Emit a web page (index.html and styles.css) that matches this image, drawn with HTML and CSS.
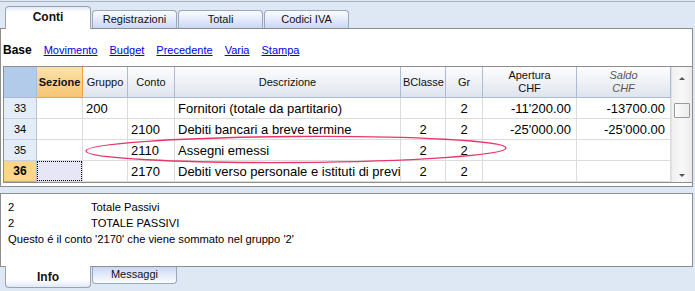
FILE: index.html
```html
<!DOCTYPE html>
<html lang="it">
<head>
    <meta charset="UTF-8">
    <title>Conti</title>
    <link rel="stylesheet" href="styles.css">
</head>
<body>
    <div class="topline"></div>
    <div class="tabs">
        <div class="tab active">Conti</div>
        <div class="tab">Registrazioni</div>
        <div class="tab">Totali</div>
        <div class="tab">Codici IVA</div>
    </div>
    <div class="panel">
        <div class="views">
            <b>Base</b>
            <a href="#">Movimento</a>
            <a href="#">Budget</a>
            <a href="#">Precedente</a>
            <a href="#">Varia</a>
            <a href="#">Stampa</a>
        </div>
        <div class="grid-wrap">
            <table class="grid">
                <colgroup>
                    <col class="c-num"><col class="c-sez"><col class="c-gru"><col class="c-con">
                    <col class="c-des"><col class="c-bcl"><col class="c-gr"><col class="c-ape"><col class="c-sal">
                </colgroup>
                <thead>
                    <tr>
                        <th class="corner"></th>
                        <th class="cur">Sezione</th>
                        <th>Gruppo</th>
                        <th>Conto</th>
                        <th>Descrizione</th>
                        <th>BClasse</th>
                        <th>Gr</th>
                        <th>Apertura<br>CHF</th>
                        <th class="calc">Saldo<br>CHF</th>
                    </tr>
                </thead>
                <tbody>
                    <tr>
                        <td class="num">33</td><td></td><td>200</td><td></td>
                        <td>Fornitori (totale da partitario)</td><td class="mid"></td><td class="mid">2</td>
                        <td class="amt">-11'200.00</td><td class="amt">-13700.00</td>
                    </tr>
                    <tr>
                        <td class="num">34</td><td></td><td></td><td>2100</td>
                        <td>Debiti bancari a breve termine</td><td class="mid">2</td><td class="mid">2</td>
                        <td class="amt">-25'000.00</td><td class="amt">-25'000.00</td>
                    </tr>
                    <tr>
                        <td class="num">35</td><td></td><td></td><td>2110</td>
                        <td>Assegni emessi</td><td class="mid">2</td><td class="mid">2</td>
                        <td></td><td></td>
                    </tr>
                    <tr class="current">
                        <td class="num">36</td><td class="sel"><span></span></td><td></td><td>2170</td>
                        <td>Debiti verso personale e istituti di previ</td><td class="mid">2</td><td class="mid">2</td>
                        <td></td><td></td>
                    </tr>
                </tbody>
            </table>
            <div class="scrollbar">
                <div class="arrow up"></div>
                <div class="thumb"></div>
                <div class="track"></div>
                <div class="arrow down"></div>
            </div>
        </div>
    </div>
    <div class="info">
        <span>2</span><span>Totale Passivi</span>
        <span>2</span><span>TOTALE PASSIVI</span>
        <span class="wide">Questo é il conto '2170' che viene sommato nel gruppo '2'</span>
    </div>
    <div class="tabs bottom">
        <div class="tab active">Info</div>
        <div class="tab">Messaggi</div>
    </div>

    <svg class="mark" width="695" height="291" viewBox="0 0 695 291">
        <ellipse cx="296" cy="149.5" rx="210" ry="13" fill="none" stroke="#e8366b" stroke-width="1.4" transform="rotate(-0.4 296 149.5)"/>
    </svg>
</body>
</html>
```

FILE: styles.css
```css
body {
    margin: 0;
    padding-top: 1px;
    width: 695px;
    height: 290px;
    background-color: #dee8f4;
    font-family: "Liberation Sans", Arial, sans-serif;
    font-size: 11px;
    color: #000;
    position: relative;
    overflow: hidden;
}
.topline {
    height: 0;
    border-top: 1px solid #a8b3c2;
}

/* tabs */
.tabs {
    display: flex;
    align-items: flex-end;
    gap: 1px;
    padding-left: 5px;
    margin-top: 4px;
    height: 22px;
    position: relative;
    z-index: 2;
}
.tab {
    width: 83px;
    height: 17px;
    line-height: 17px;
    text-align: center;
    border: 1px solid #9aa7bd;
    border-bottom: none;
    border-radius: 4px 4px 0 0;
    background: linear-gradient(#fbfcff, #e6edfb 45%, #c9d7f4);
    color: #111;
}
.tab.active {
    width: 84px;
    height: 22px;
    line-height: 21px;
    font-weight: bold;
    font-size: 12px;
    border-color: #9aa3ae;
    background: linear-gradient(#dfe9f8, #ffffff 5px, #ffffff);
    margin-bottom: -1px;
}
.tabs.bottom {
    margin-top: 0;
    align-items: flex-start;
}
.tabs.bottom .tab {
    border-top: none;
    border-bottom: 1px solid #9aa7bd;
    border-radius: 0 0 4px 4px;
    height: 16px;
    line-height: 14px;
    background: linear-gradient(#c9d7f4, #e6edfb 55%, #fbfcff);
}
.tabs.bottom .tab.active {
    height: 21px;
    line-height: 22px;
    border-color: #9aa3ae;
    background: linear-gradient(#ffffff, #ffffff 14px, #dfe9f8);
    margin-top: -1px;
}

/* main panel */
.panel {
    height: 157px;
    width: 689px;
    border: 1px solid #8e8e8e;
    background-color: #fff;
    padding: 0 0 0 2px;
}
.views {
    height: 33px;
    padding-top: 4px;
    display: flex;
    align-items: center;
    gap: 12px;
    font-size: 11px;
}
.views b {
    font-size: 12px;
}
.views a {
    color: #0000ee;
}

.grid-wrap {
    display: flex;
    width: 688px;
    border: 1px solid #8e8e8e;
    background-color: #fff;
}
.grid {
    border-collapse: separate;
    border-spacing: 0;
    table-layout: fixed;
    width: 667px;
}
.c-num { width: 33px; }
.c-sez { width: 46px; }
.c-gru { width: 45px; }
.c-con { width: 47px; }
.c-des { width: 226px; }
.c-bcl { width: 45px; }
.c-gr { width: 37px; }
.c-ape { width: 94px; }
.c-sal { width: 94px; }

.grid th {
    height: 30px;
    padding: 0 2px;
    font-weight: normal;
    font-size: 11px;
    line-height: 13px;
    white-space: nowrap;
    overflow: hidden;
    border-right: 1px solid #a8bcd6;
    border-bottom: 1px solid #a8bcd6;
    background: linear-gradient(#fdfdfe, #eef1f6 50%, #dee4ed);
    color: #111;
}
.grid th.corner {
    background: #b3cbea;
    border-right-color: #a7bdd9;
}
.grid th.cur {
    font-weight: bold;
    padding: 0;
    background: linear-gradient(#fbe2ac, #f9d48c 50%, #f6c577);
    border-right: 1px solid #f0a23c;
    border-bottom-color: #f0a23c;
}
.grid th.calc {
    font-style: italic;
    color: #555;
}
.grid td {
    height: 20px;
    padding: 0 3px;
    font-size: 13px;
    white-space: nowrap;
    overflow: hidden;
    border-right: 1px solid #dcdcdc;
    border-bottom: 1px solid #dcdcdc;
}
.grid td.num {
    text-align: center;
    font-size: 11px;
    background-color: #e4ecf7;
    border-right-color: #b3c3d8;
    border-bottom-color: #c4d1e2;
}
.grid tr.current td.num {
    background-color: #fdd68c;
    font-weight: bold;
    font-size: 12px;
    border-bottom-color: #f0a23c;
}
.grid td.mid {
    text-align: center;
}
.grid td.amt {
    text-align: right;
    padding-right: 5px;
}
.grid td.sel {
    padding: 0;
}
.grid td.sel span {
    display: block;
    height: 18px;
    border: 1px dotted #000;
    background-color: #e6e6f6;
}

/* scrollbar */
.scrollbar {
    width: 20px;
    display: flex;
    flex-direction: column;
    align-items: center;
    background: linear-gradient(90deg, #f0f0f0, #f8f8f8 50%, #ececec);
    border-left: 1px solid #e2e2e2;
}
.arrow {
    height: 30px;
    width: 16px;
    position: relative;
}
.arrow::after {
    content: "";
    position: absolute;
    left: 5px;
    border-left: 3px solid transparent;
    border-right: 3px solid transparent;
}
.arrow.up::after {
    top: 10px;
    border-bottom: 3px solid #555;
}
.arrow.down {
    height: 12px;
}
.arrow.down::after {
    top: 4px;
    border-top: 3px solid #555;
}
.thumb {
    width: 14px;
    height: 13px;
    margin-top: 6px;
    border: 1px solid #9a9a9a;
    border-radius: 1px;
    background: linear-gradient(90deg, #fbfbfb, #ececec);
}
.track {
    flex: 1;
}

/* info panel */
.info {
    margin-top: 6px;
    height: 59px;
    width: 684px;
    border: 1px solid #8e8e8e;
    background-color: #fff;
    padding: 5px 0 8px 7px;
    display: grid;
    grid-template-columns: 83px auto;
    grid-template-rows: 16px 16px 16px;
    align-content: start;
    font-size: 11.2px;
    line-height: 16px;
}
.info .wide {
    grid-column: 1 / 3;
}

.mark {
    position: absolute;
    left: 0;
    top: 0;
    pointer-events: none;
    z-index: 3;
}
```
